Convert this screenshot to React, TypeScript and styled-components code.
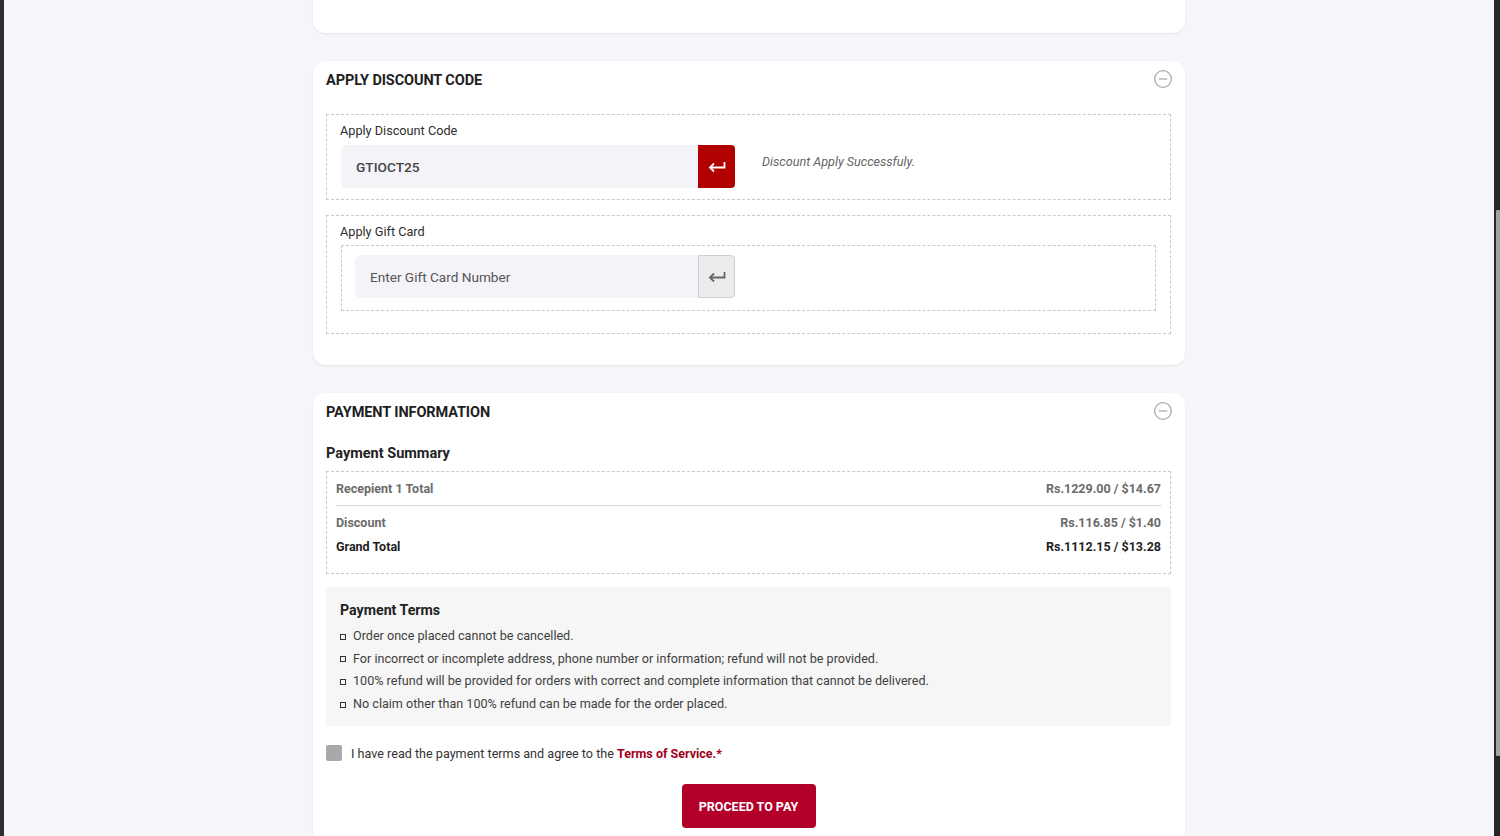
import React, { useState } from 'react';
import styled, { createGlobalStyle } from 'styled-components';

const GlobalStyle = createGlobalStyle`
  html, body {
    margin: 0;
    padding: 0;
    height: 100%;
    overflow: hidden;
    font-family: Roboto, "Liberation Sans", Arial, sans-serif;
  }
  * { box-sizing: border-box; }
`;

const terms = [
  'Order once placed cannot be cancelled.',
  'For incorrect or incomplete address, phone number or information; refund will not be provided.',
  '100% refund will be provided for orders with correct and complete information that cannot be delivered.',
  'No claim other than 100% refund can be made for the order placed.',
];

const EnterIcon: React.FC<{ color: string }> = ({ color }) => (
  <svg width="18" height="12" viewBox="0 0 18 12" fill="none">
    <path d="M16.5 1v5.5H2" stroke={color} strokeWidth="1.8" />
    <path d="M6 2.5L2 6.5l4 4" stroke={color} strokeWidth="1.8" fill="none" />
  </svg>
);

const MinusCircle: React.FC = () => (
  <svg width="20" height="20" viewBox="0 0 20 20" fill="none">
    <circle cx="10" cy="10" r="8.3" stroke="#a9a9a9" strokeWidth="1.3" />
    <path d="M5.8 10h8.4" stroke="#a9a9a9" strokeWidth="1.3" />
  </svg>
);

const App: React.FC = () => {
  const [code, setCode] = useState('GTIOCT25');
  const [gift, setGift] = useState('');
  const [agree, setAgree] = useState(false);

  return (
    <Frame>
      <GlobalStyle />
      <EdgeLeft />
      <Page>
        <TopCard />

        <Card>
          <CardHeader>
            <CardTitle>APPLY DISCOUNT CODE</CardTitle>
            <CollapseButton><MinusCircle /></CollapseButton>
          </CardHeader>
          <CardBody>
            <DashedBox $pad="8px 14px 11px">
              <FieldLabel>Apply Discount Code</FieldLabel>
              <FieldRow>
                <InputGroup $width={394}>
                  <CodeInput value={code} onChange={(e) => setCode(e.target.value)} $bold />
                  <EnterButton $active><EnterIcon color="#ffffff" /></EnterButton>
                </InputGroup>
                <SuccessText>Discount Apply Successfuly.</SuccessText>
              </FieldRow>
            </DashedBox>

            <DashedBox $pad="8px 14px 22px">
              <FieldLabel>Apply Gift Card</FieldLabel>
              <InnerDashed>
                <InputGroup $width={380}>
                  <CodeInput
                    placeholder="Enter Gift Card Number"
                    value={gift}
                    onChange={(e) => setGift(e.target.value)}
                  />
                  <EnterButton><EnterIcon color="#666666" /></EnterButton>
                </InputGroup>
              </InnerDashed>
            </DashedBox>
          </CardBody>
        </Card>

        <Card>
          <CardHeader>
            <CardTitle>PAYMENT INFORMATION</CardTitle>
            <CollapseButton><MinusCircle /></CollapseButton>
          </CardHeader>
          <CardBody $gap={0}>
            <SubTitle>Payment Summary</SubTitle>
            <SummaryBox>
              <SummaryHead>
                <SummaryLabel>Recepient 1 Total</SummaryLabel>
                <SummaryLabel>Rs.1229.00 / $14.67</SummaryLabel>
              </SummaryHead>
              <SummaryRows>
                <SummaryRow>
                  <SummaryLabel>Discount</SummaryLabel>
                  <SummaryLabel>Rs.116.85 / $1.40</SummaryLabel>
                </SummaryRow>
                <SummaryRow>
                  <SummaryLabel $dark>Grand Total</SummaryLabel>
                  <SummaryLabel $dark>Rs.1112.15 / $13.28</SummaryLabel>
                </SummaryRow>
              </SummaryRows>
            </SummaryBox>

            <TermsBox>
              <TermsTitle>Payment Terms</TermsTitle>
              <TermsList>
                {terms.map((t, i) => (
                  <TermsItem key={i}>
                    <Bullet />
                    {t}
                  </TermsItem>
                ))}
              </TermsList>
            </TermsBox>

            <AgreeRow onClick={() => setAgree(!agree)}>
              <CheckBox $checked={agree} />
              <AgreeText>
                I have read the payment terms and agree to the <TermsLink>Terms of Service.*</TermsLink>
              </AgreeText>
            </AgreeRow>

            <PayRow>
              <PayButton>PROCEED TO PAY</PayButton>
            </PayRow>
          </CardBody>
        </Card>
      </Page>
      <ScrollTrack>
        <ScrollThumb />
      </ScrollTrack>
    </Frame>
  );
};

export default App;

const Frame = styled.div`
  display: flex;
  width: 100vw;
  height: 836px;
  overflow: hidden;
  background: #2b2b2b;
`;

const EdgeLeft = styled.div`
  width: 4px;
  flex-shrink: 0;
  background: #2f2f2f;
`;

const ScrollTrack = styled.div`
  width: 6px;
  flex-shrink: 0;
  background: #262626;
  padding-top: 210px;
  display: flex;
  justify-content: flex-end;
`;

const ScrollThumb = styled.div`
  width: 4px;
  height: 546px;
  background: #a3a3a3;
  border-radius: 1px;
`;

const Page = styled.div`
  flex: 1;
  background: #f6f5fa;
  display: flex;
  flex-direction: column;
  align-items: center;
  gap: 28px;
  overflow: hidden;
`;

const TopCard = styled.div`
  width: 872px;
  height: 33px;
  flex-shrink: 0;
  background: #fff;
  border-radius: 0 0 12px 12px;
  box-shadow: 0 1px 2px rgba(0, 0, 0, 0.08);
`;

const Card = styled.div`
  width: 872px;
  flex-shrink: 0;
  background: #fff;
  border-radius: 12px;
  box-shadow: 0 1px 2px rgba(0, 0, 0, 0.08);
  padding: 0 14px 31px 13px;
`;

const CardHeader = styled.div`
  height: 38px;
  display: flex;
  align-items: center;
  justify-content: space-between;
`;

const CardTitle = styled.h2`
  margin: 0;
  font-size: 14.5px;
  font-weight: 700;
  color: #1e1e1e;
  letter-spacing: -0.1px;
`;

const CollapseButton = styled.button`
  background: none;
  border: none;
  padding: 0;
  margin-right: -2px;
  margin-top: -2px;
  display: flex;
  cursor: pointer;
`;

const CardBody = styled.div<{ $gap?: number }>`
  display: flex;
  flex-direction: column;
  gap: ${(p) => (p.$gap ?? 15)}px;
  padding-top: ${(p) => (p.$gap === 0 ? 14 : 15)}px;
`;

const DashedBox = styled.div<{ $pad: string }>`
  border: 1px dashed #c9c9c9;
  padding: ${(p) => p.$pad};
  display: flex;
  flex-direction: column;
  gap: 5px;
`;

const FieldLabel = styled.label`
  font-size: 12.7px;
  color: #2e2e2e;
  line-height: 16px;
  margin-left: -1px;
`;

const FieldRow = styled.div`
  display: flex;
  align-items: center;
  gap: 27px;
  margin-top: 1px;
`;

const InnerDashed = styled.div`
  border: 1px dashed #c9c9c9;
  padding: 9px 13px 12px;
`;

const InputGroup = styled.div<{ $width: number }>`
  width: ${(p) => p.$width}px;
  height: 43px;
  display: flex;
`;

const CodeInput = styled.input<{ $bold?: boolean }>`
  flex: 1;
  min-width: 0;
  border: none;
  outline: none;
  background: #f4f3f8;
  border-radius: 6px 0 0 6px;
  padding: 0 15px;
  font-family: Roboto, "Liberation Sans", Arial, sans-serif;
  font-size: ${(p) => (p.$bold ? 13.7 : 13.6)}px;
  font-weight: ${(p) => (p.$bold ? 500 : 400)};
  color: #444;
  &::placeholder {
    color: #555;
  }
`;

const EnterButton = styled.button<{ $active?: boolean }>`
  width: 37px;
  flex-shrink: 0;
  display: flex;
  align-items: center;
  justify-content: center;
  border: ${(p) => (p.$active ? 'none' : '1px solid #cfcfcf')};
  background: ${(p) => (p.$active ? '#b00000' : '#ececec')};
  border-radius: 0 4px 4px 0;
  padding: 0;
  cursor: pointer;
`;

const SuccessText = styled.span`
  font-size: 12.6px;
  font-style: italic;
  color: #666;
  margin-top: -10px;
`;

const SubTitle = styled.h3`
  margin: 0 0 8px;
  font-size: 14.5px;
  font-weight: 700;
  color: #222;
  line-height: 18px;
`;

const SummaryBox = styled.div`
  border: 1px dashed #c9c9c9;
  padding: 0 9px 15px;
`;

const SummaryHead = styled.div`
  height: 34px;
  display: flex;
  align-items: center;
  justify-content: space-between;
  border-bottom: 1px solid #d6d6d6;
`;

const SummaryRows = styled.div`
  padding-top: 4px;
`;

const SummaryRow = styled.div`
  height: 24px;
  display: flex;
  align-items: center;
  justify-content: space-between;
`;

const SummaryLabel = styled.span<{ $dark?: boolean }>`
  font-size: 12.5px;
  font-weight: 700;
  color: ${(p) => (p.$dark ? '#1f1f1f' : '#6b6b6b')};
`;

const TermsBox = styled.div`
  margin-top: 13px;
  background: #f6f6f6;
  padding: 14px 14px 11px;
`;

const TermsTitle = styled.h4`
  margin: 0 0 6px;
  font-size: 14.2px;
  font-weight: 700;
  color: #222;
  line-height: 18px;
`;

const TermsList = styled.ul`
  list-style: none;
  margin: 0;
  padding: 0;
`;

const TermsItem = styled.li`
  display: flex;
  align-items: center;
  gap: 7px;
  font-size: 12.6px;
  line-height: 22.6px;
  color: #3f3f3f;
`;

const Bullet = styled.span`
  width: 6px;
  height: 6px;
  border: 1px solid #333;
  flex-shrink: 0;
  margin-top: 1px;
`;

const AgreeRow = styled.div`
  margin-top: 19px;
  display: flex;
  align-items: center;
  gap: 9px;
  cursor: pointer;
`;

const CheckBox = styled.span<{ $checked: boolean }>`
  width: 16px;
  height: 16px;
  border-radius: 2px;
  background: ${(p) => (p.$checked ? '#b00000' : '#a9a9a9')};
  flex-shrink: 0;
`;

const AgreeText = styled.span`
  font-size: 12.6px;
  color: #333;
`;

const TermsLink = styled.span`
  color: #a1001a;
  font-weight: 700;
  font-size: 12.5px;
`;

const PayRow = styled.div`
  margin-top: 23px;
  display: flex;
  justify-content: center;
`;

const PayButton = styled.button`
  width: 134px;
  height: 44px;
  border: none;
  border-radius: 4px;
  background: #b3002b;
  color: #fff;
  font-family: Roboto, "Liberation Sans", Arial, sans-serif;
  font-size: 12.5px;
  font-weight: 700;
  cursor: pointer;
`;
